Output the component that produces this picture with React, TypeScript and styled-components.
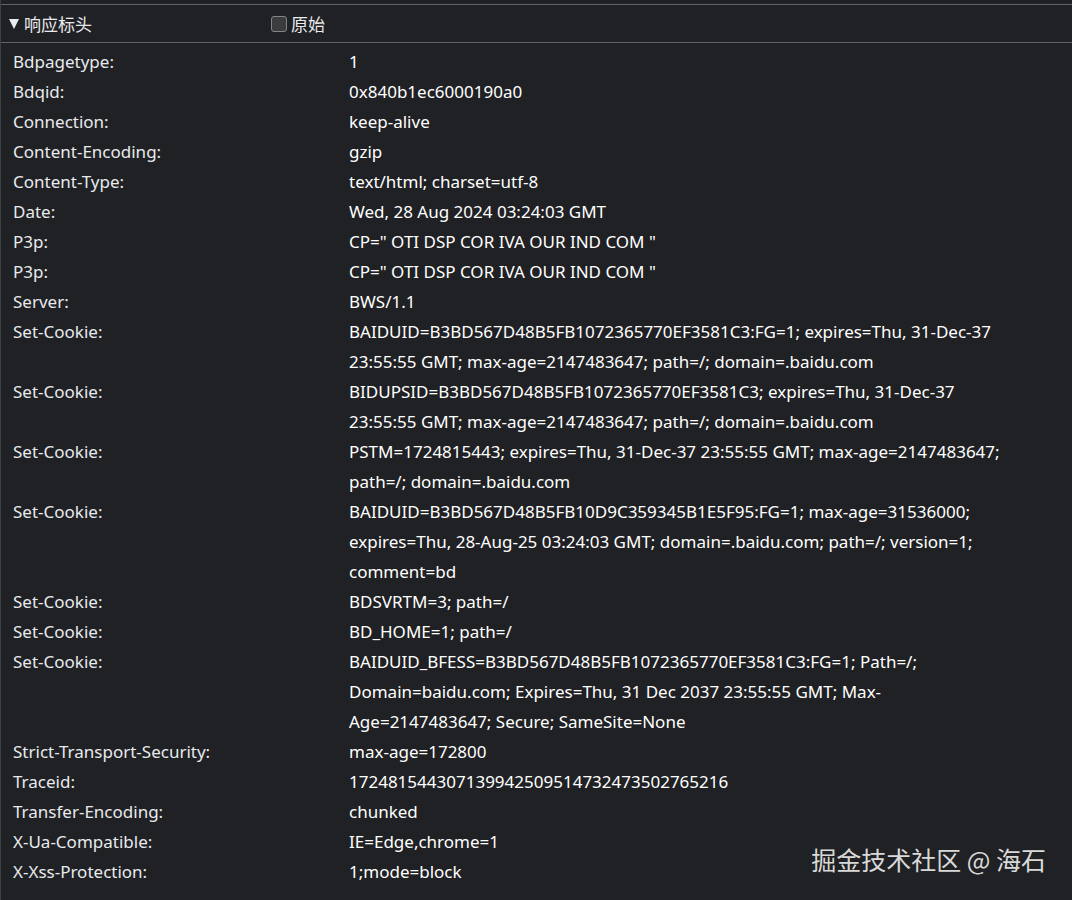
import { ReactElement } from 'react';
import styled, { createGlobalStyle } from 'styled-components';

const GlobalStyle = createGlobalStyle`
  html, body {
    margin: 0;
    padding: 0;
    background-color: #202124;
  }
`;

const Panel = styled.section`
  background-color: #202124;
  border-left: 1px solid #3c4043;
  box-sizing: border-box;
  color: #e8eaed;
  font-family: 'Noto Sans', 'Noto Sans CJK SC', sans-serif;
  font-size: 17px;
  height: 900px;
  overflow: hidden;
  padding-top: 4px;
  position: relative;
  width: 1072px;
`;

const SectionHeader = styled.header`
  align-items: center;
  border-bottom: 1px solid #5f6368;
  border-top: 1px solid #5f6368;
  display: flex;
  height: 37px;
  padding-left: 8px;
`;

const Title = styled.div`
  align-items: center;
  display: flex;
  gap: 5px;
  width: 262px;
`;

const Caret = styled.span`
  border-left: 5.5px solid transparent;
  border-right: 5.5px solid transparent;
  border-top: 10px solid #e8eaed;
  display: inline-block;
  height: 0;
  width: 0;
`;

const RawToggle = styled.label`
  align-items: center;
  display: flex;
  gap: 4px;
`;

const Box = styled.span`
  background-color: #3c3c3c;
  border: 1px solid #80868b;
  border-radius: 3px;
  box-sizing: border-box;
  display: inline-block;
  height: 16px;
  width: 16px;
`;

const HeaderList = styled.dl`
  margin: 0;
  padding: 4px 0 0 12px;
`;

const Row = styled.div`
  display: grid;
  grid-template-columns: 336px 665px;
  line-height: 30px;
`;

const Name = styled.dt`
  color: #e8eaed;
  margin: 0;
`;

const Value = styled.dd`
  color: #ffffff;
  margin: 0;
  overflow-wrap: anywhere;
`;

const Watermark = styled.div`
  bottom: 23px;
  color: #d9d9d9;
  font-family: 'Noto Sans CJK SC', 'Noto Sans', sans-serif;
  font-size: 25px;
  position: absolute;
  right: 26px;
`;

const headers: [string, string][] = [
  ['Bdpagetype:', '1'],
  ['Bdqid:', '0x840b1ec6000190a0'],
  ['Connection:', 'keep-alive'],
  ['Content-Encoding:', 'gzip'],
  ['Content-Type:', 'text/html; charset=utf-8'],
  ['Date:', 'Wed, 28 Aug 2024 03:24:03 GMT'],
  ['P3p:', 'CP=" OTI DSP COR IVA OUR IND COM "'],
  ['P3p:', 'CP=" OTI DSP COR IVA OUR IND COM "'],
  ['Server:', 'BWS/1.1'],
  [
    'Set-Cookie:',
    'BAIDUID=B3BD567D48B5FB1072365770EF3581C3:FG=1; expires=Thu, 31-Dec-37 23:55:55 GMT; max-age=2147483647; path=/; domain=.baidu.com',
  ],
  [
    'Set-Cookie:',
    'BIDUPSID=B3BD567D48B5FB1072365770EF3581C3; expires=Thu, 31-Dec-37 23:55:55 GMT; max-age=2147483647; path=/; domain=.baidu.com',
  ],
  [
    'Set-Cookie:',
    'PSTM=1724815443; expires=Thu, 31-Dec-37 23:55:55 GMT; max-age=2147483647; path=/; domain=.baidu.com',
  ],
  [
    'Set-Cookie:',
    'BAIDUID=B3BD567D48B5FB10D9C359345B1E5F95:FG=1; max-age=31536000; expires=Thu, 28-Aug-25 03:24:03 GMT; domain=.baidu.com; path=/; version=1; comment=bd',
  ],
  ['Set-Cookie:', 'BDSVRTM=3; path=/'],
  ['Set-Cookie:', 'BD_HOME=1; path=/'],
  [
    'Set-Cookie:',
    'BAIDUID_BFESS=B3BD567D48B5FB1072365770EF3581C3:FG=1; Path=/; Domain=baidu.com; Expires=Thu, 31 Dec 2037 23:55:55 GMT; Max-Age=2147483647; Secure; SameSite=None',
  ],
  ['Strict-Transport-Security:', 'max-age=172800'],
  ['Traceid:', '172481544307139942509514732473502765216'],
  ['Transfer-Encoding:', 'chunked'],
  ['X-Ua-Compatible:', 'IE=Edge,chrome=1'],
  ['X-Xss-Protection:', '1;mode=block'],
];

function App(): ReactElement {
  return (
    <>
      <GlobalStyle />
      <Panel>
        <SectionHeader>
          <Title>
            <Caret />
            <span>响应标头</span>
          </Title>
          <RawToggle>
            <Box />
            <span>原始</span>
          </RawToggle>
        </SectionHeader>
        <HeaderList>
          {headers.map(([name, value], i) => (
            <Row key={i}>
              <Name>{name}</Name>
              <Value>{value}</Value>
            </Row>
          ))}
        </HeaderList>
        <Watermark>掘金技术社区 @ 海石</Watermark>
      </Panel>
    </>
  );
}

export default App;
